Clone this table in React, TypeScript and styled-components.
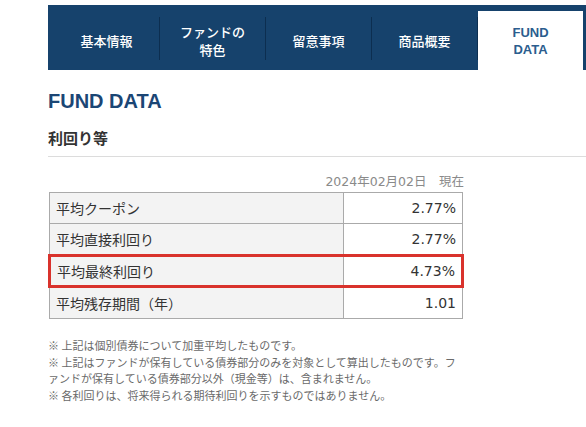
import React from "react";
import styled, { createGlobalStyle } from "styled-components";

const Global = createGlobalStyle`
  html, body { margin: 0; padding: 0; background: #fff; }
  body { font-family: "DejaVu Sans", "Noto Sans CJK JP", sans-serif; color: #333; overflow: hidden; }
`;

const Page = styled.div`
  width: 586px;
  height: 427px;
  overflow: hidden;
  padding: 5px 0 0 48px;
  box-sizing: border-box;
`;

const TabBar = styled.nav`
  display: flex;
  align-items: stretch;
  background: #16426c;
  padding: 6px 0 0 6px;
  height: 65px;
  box-sizing: border-box;
`;

const Tab = styled.div<{ $active?: boolean }>`
  flex: 0 0 105px;
  display: flex;
  align-items: center;
  justify-content: center;
  text-align: center;
  background: ${(p) => (p.$active ? "#fff" : "transparent")};
  color: ${(p) => (p.$active ? "#2b5d8e" : "#fff")};
  font-family: ${(p) =>
    p.$active ? `"Liberation Sans", Arial, sans-serif` : `"Noto Sans CJK JP", sans-serif`};
  font-weight: ${(p) => (p.$active ? 700 : 500)};
  font-size: 13px;
  line-height: ${(p) => (p.$active ? "17px" : "17.5px")};
`;

const Sep = styled.span`
  flex: 0 0 1px;
  height: 43px;
  margin-top: 6px;
  background: #0c2e50;
`;

const Heading = styled.h2`
  margin: 19px 0 0;
  font-family: "Liberation Sans", Arial, sans-serif;
  font-size: 20px;
  line-height: 24px;
  font-weight: 700;
  color: #1b4675;
`;

const SubHeading = styled.h3`
  margin: 15px 0 0;
  padding-bottom: 8px;
  border-bottom: 1px solid #dcdcdc;
  font-family: "Noto Sans CJK JP", sans-serif;
  font-size: 15px;
  line-height: 20px;
  font-weight: 700;
  color: #333;
`;

const Section = styled.div`
  width: 416px;
`;

const AsOf = styled.div`
  margin-top: 16px;
  text-align: right;
  font-size: 12.5px;
  line-height: 18px;
  color: #8a8a8a;
  margin-bottom: 1px;
`;

const Table = styled.table`
  width: 416px;
  border-collapse: collapse;
  font-size: 14px;
`;

const Label = styled.th<{ $hl?: boolean }>`
  width: 286px;
  height: ${(p) => (p.$hl ? "28px" : "30px")};
  padding: 0 0 0 6px;
  text-align: left;
  font-weight: 400;
  font-family: "Noto Sans CJK JP", sans-serif;
  background: #f3f3f3;
  color: #333;
  border: 1px solid #aaa;
  ${(p) =>
    p.$hl &&
    `border-top: 3px solid #d9322c; border-bottom: 3px solid #d9322c; border-left: 3px solid #d9322c;`}
`;

const Value = styled.td<{ $hl?: boolean }>`
  height: ${(p) => (p.$hl ? "28px" : "30px")};
  padding: 0 6px 0 0;
  text-align: right;
  color: #333;
  border: 1px solid #aaa;
  ${(p) =>
    p.$hl &&
    `border-top: 3px solid #d9322c; border-bottom: 3px solid #d9322c; border-right: 3px solid #d9322c;`}
`;

const Notes = styled.div`
  margin-top: 18px;
  font-family: "Noto Sans CJK JP", sans-serif;
  font-size: 11px;
  line-height: 16.7px;
  color: #6a6a6a;
`;

const Note = styled.p`
  margin: 0;
`;

const tabs = [
  ["基本情報"],
  ["ファンドの", "特色"],
  ["留意事項"],
  ["商品概要"],
];

const rows: [string, string, boolean][] = [
  ["平均クーポン", "2.77%", false],
  ["平均直接利回り", "2.77%", false],
  ["平均最終利回り", "4.73%", true],
  ["平均残存期間（年）", "1.01", false],
];

export default function App() {
  return (
    <Page>
      <Global />
      <TabBar>
        {tabs.map((t, i) => (
          <React.Fragment key={i}>
            <Tab>
              <span>
                {t.map((l, j) => (
                  <React.Fragment key={j}>
                    {j > 0 && <br />}
                    {l}
                  </React.Fragment>
                ))}
              </span>
            </Tab>
            {i < 3 && <Sep />}
          </React.Fragment>
        ))}
        <Sep />
        <Tab $active>
          <span>
            FUND
            <br />
            DATA
          </span>
        </Tab>
      </TabBar>
      <Heading>FUND DATA</Heading>
      <SubHeading>利回り等</SubHeading>
      <Section>
        <AsOf>2024年02月02日　現在</AsOf>
        <Table>
          <tbody>
            {rows.map(([l, v, hl]) => (
              <tr key={l}>
                <Label $hl={hl}>{l}</Label>
                <Value $hl={hl}>{v}</Value>
              </tr>
            ))}
          </tbody>
        </Table>
        <Notes>
          <Note>※ 上記は個別債券について加重平均したものです。</Note>
          <Note>
            ※ 上記はファンドが保有している債券部分のみを対象として算出したものです。ファンドが保有している債券部分以外（現金等）は、含まれません。
          </Note>
          <Note>※ 各利回りは、将来得られる期待利回りを示すものではありません。</Note>
        </Notes>
      </Section>
    </Page>
  );
}
